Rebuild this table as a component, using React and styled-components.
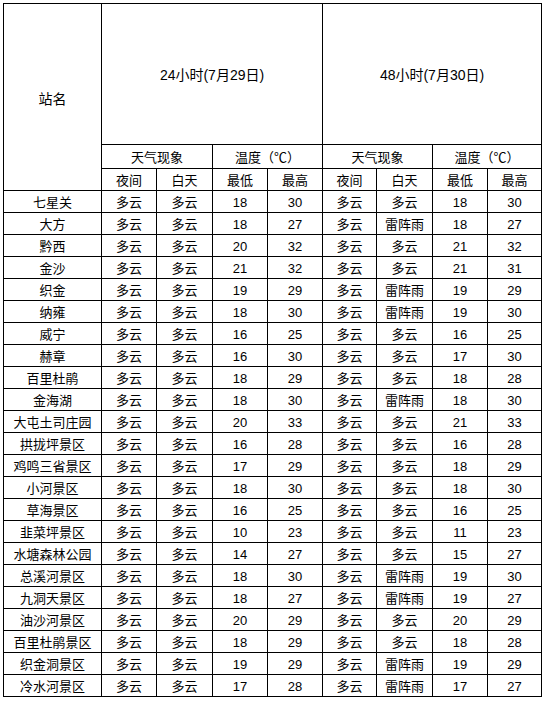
import React from "react";
import styled, { createGlobalStyle } from "styled-components";

const GlobalStyle = createGlobalStyle`
  html, body {
    margin: 0;
    padding: 0;
    background: #fff;
  }
  body {
    font-family: "Liberation Sans", "Noto Sans CJK SC", sans-serif;
    color: #000;
  }
`;

const Page = styled.div`
  padding: 3px 0 0 3px;
`;

const Table = styled.table`
  border-collapse: collapse;
  table-layout: fixed;
  width: 539px;
  font-size: 13px;
  line-height: 1;
`;

const Cell = styled.td`
  border: 1px solid #000;
  padding: 0;
  text-align: center;
  vertical-align: middle;
  white-space: nowrap;
  height: ${(p) => p.$h || 21}px;
  padding-top: ${(p) => (p.$h > 30 ? 0 : 2)}px;
  box-sizing: border-box;
`;

const Title = styled.span`
  font-size: 14px;
  position: relative;
  top: ${(p) => p.$shift || 0}px;
`;

const colWidths = [98, 55, 56, 55, 55, 54, 56, 55, 54];

const rows = [
  ["七星关", "多云", "多云", 18, 30, "多云", "多云", 18, 30],
  ["大方", "多云", "多云", 18, 27, "多云", "雷阵雨", 18, 27],
  ["黔西", "多云", "多云", 20, 32, "多云", "多云", 21, 32],
  ["金沙", "多云", "多云", 21, 32, "多云", "多云", 21, 31],
  ["织金", "多云", "多云", 19, 29, "多云", "雷阵雨", 19, 29],
  ["纳雍", "多云", "多云", 18, 30, "多云", "雷阵雨", 19, 30],
  ["威宁", "多云", "多云", 16, 25, "多云", "多云", 16, 25],
  ["赫章", "多云", "多云", 16, 30, "多云", "多云", 17, 30],
  ["百里杜鹃", "多云", "多云", 18, 29, "多云", "多云", 18, 28],
  ["金海湖", "多云", "多云", 18, 30, "多云", "雷阵雨", 18, 30],
  ["大屯土司庄园", "多云", "多云", 20, 33, "多云", "多云", 21, 33],
  ["拱拢坪景区", "多云", "多云", 16, 28, "多云", "多云", 16, 28],
  ["鸡鸣三省景区", "多云", "多云", 17, 29, "多云", "多云", 18, 29],
  ["小河景区", "多云", "多云", 18, 30, "多云", "多云", 18, 30],
  ["草海景区", "多云", "多云", 16, 25, "多云", "多云", 16, 25],
  ["韭菜坪景区", "多云", "多云", 10, 23, "多云", "多云", 11, 23],
  ["水塘森林公园", "多云", "多云", 14, 27, "多云", "多云", 15, 27],
  ["总溪河景区", "多云", "多云", 18, 30, "多云", "雷阵雨", 19, 30],
  ["九洞天景区", "多云", "多云", 18, 27, "多云", "雷阵雨", 19, 27],
  ["油沙河景区", "多云", "多云", 20, 29, "多云", "多云", 20, 29],
  ["百里杜鹃景区", "多云", "多云", 18, 29, "多云", "多云", 18, 28],
  ["织金洞景区", "多云", "多云", 19, 29, "多云", "雷阵雨", 19, 29],
  ["冷水河景区", "多云", "多云", 17, 28, "多云", "雷阵雨", 17, 27],
];

const periods = ["24小时(7月29日)", "48小时(7月30日)"];

export default function App() {
  return (
    <Page>
      <GlobalStyle />
      <Table>
        <colgroup>
          {colWidths.map((w, i) => (
            <col key={i} style={{ width: w }} />
          ))}
        </colgroup>
        <tbody>
          <tr>
            <Cell rowSpan={3} $h={141}>
              <Title $shift={2}>站名</Title>
            </Cell>
            {periods.map((p) => (
              <Cell key={p} colSpan={4} $h={141}>
                <Title $shift={1}>{p}</Title>
              </Cell>
            ))}
          </tr>
          <tr>
            {periods.map((p) => (
              <React.Fragment key={p}>
                <Cell colSpan={2} $h={24}>天气现象</Cell>
                <Cell colSpan={2} $h={24}>温度（℃）</Cell>
              </React.Fragment>
            ))}
          </tr>
          <tr>
            {periods.map((p) => (
              <React.Fragment key={p}>
                <Cell $h={22}>夜间</Cell>
                <Cell $h={22}>白天</Cell>
                <Cell $h={22}>最低</Cell>
                <Cell $h={22}>最高</Cell>
              </React.Fragment>
            ))}
          </tr>
          {rows.map((r) => (
            <tr key={r[0]}>
              {r.map((v, i) => (
                <Cell key={i} $h={22}>{v}</Cell>
              ))}
            </tr>
          ))}
        </tbody>
      </Table>
    </Page>
  );
}
